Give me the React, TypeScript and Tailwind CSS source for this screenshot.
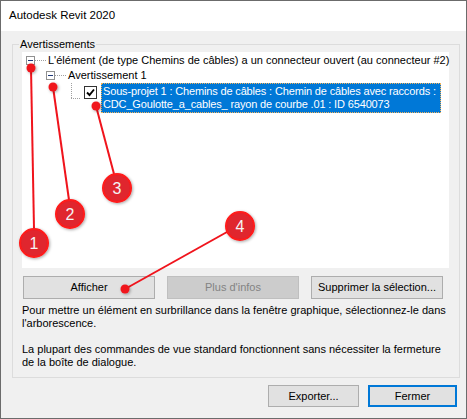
import React from "react";

const font = "font-['Liberation_Sans',Arial,sans-serif]";

function ExpandBox() {
  return (
    <span className="flex h-[9px] w-[9px] items-center justify-center border border-[#919191] bg-white">
      <span className="h-px w-[5px] bg-[#1f3a7a]" />
    </span>
  );
}

function CheckBox() {
  return (
    <span className="flex h-[13px] w-[13px] items-center justify-center border border-[#333333] bg-white">
      <svg width="9" height="9" viewBox="0 0 9 9">
        <path d="M1 4.5 L3.5 7 L8 1.5" fill="none" stroke="#000" strokeWidth="1.9" />
      </svg>
    </span>
  );
}

function TreeView() {
  return (
    <div className="relative h-[216px] w-full bg-white">
      {/* connector lines */}
      <svg className="absolute left-0 top-0" width="100" height="60">
        <g stroke="#a0a0a0" strokeWidth="1" strokeDasharray="1 1" fill="none">
          <path d="M13 8.5 H25" />
          <path d="M33 23.5 H45" />
          <path d="M49.5 31 V46" />
          <path d="M49 46.5 H59" />
        </g>
      </svg>
      <div className="relative flex flex-col pt-px">
        <div className="flex h-[15px] items-center">
          <span className="ml-[4px]">
            <ExpandBox />
          </span>
          <span className="ml-[13px] whitespace-nowrap leading-[15px]">
            L'élément (de type Chemins de câbles) a un connecteur ouvert (au connecteur #2)
          </span>
        </div>
        <div className="flex h-[15px] items-center">
          <span className="ml-[24px]">
            <ExpandBox />
          </span>
          <span className="ml-[13px] whitespace-nowrap leading-[15px]">Avertissement 1</span>
        </div>
        <div className="flex items-start">
          <span className="ml-[62px] mt-[3px]">
            <CheckBox />
          </span>
          <div className="ml-[4px] w-[340px] border border-dotted border-[#f3b35a] bg-[#0078d7] px-px py-px leading-[13px] tracking-[-0.15px] text-white">
            <div className="whitespace-nowrap">
              Sous-projet 1 : Chemins de câbles : Chemin de câbles avec raccords :
            </div>
            <div className="whitespace-nowrap">
              CDC_Goulotte_a_cables_ rayon de courbe .01 : ID 6540073
            </div>
          </div>
        </div>
      </div>
    </div>
  );
}

function Button({
  children,
  className = "",
  disabled = false,
}: {
  children: React.ReactNode;
  className?: string;
  disabled?: boolean;
}) {
  return (
    <button
      disabled={disabled}
      className={
        "flex items-center justify-center border leading-none " +
        (disabled
          ? "border-[#bfbfbf] bg-[#cccccc] text-[#838383] "
          : "border-[#adadad] bg-[#e1e1e1] text-black ") +
        className
      }
    >
      {children}
    </button>
  );
}

function Annotations() {
  const circles = [
    { cx: 33, cy: 242, n: "1" },
    { cx: 69, cy: 213, n: "2" },
    { cx: 116, cy: 187, n: "3" },
    { cx: 239, cy: 225, n: "4" },
  ];
  return (
    <svg className="pointer-events-none absolute left-0 top-0" width="467" height="419">
      <defs>
        <filter id="sh" x="-50%" y="-50%" width="200%" height="200%">
          <feDropShadow dx="1" dy="1" stdDeviation="1.5" floodColor="#000" floodOpacity="0.35" />
        </filter>
      </defs>
      <g stroke="#f0141c" strokeWidth="2" fill="none">
        <path d="M30 67 L33 228" />
        <path d="M52 86 L68 199" />
        <path d="M95 105 L113 173" />
        <path d="M124 288 L226 231" />
      </g>
      <g fill="#f0141c" filter="url(#sh)">
        <circle cx="30" cy="67" r="4.5" />
        <circle cx="52" cy="86" r="4.5" />
        <circle cx="95" cy="105" r="4.5" />
        <circle cx="124" cy="288" r="4.5" />
      </g>
      {circles.map((c) => (
        <g key={c.n}>
          <circle cx={c.cx} cy={c.cy} r="14" fill="#e0252d" stroke="#ff1a1a" strokeWidth="2" filter="url(#sh)" />
          <text
            x={c.cx}
            y={c.cy + 5.5}
            textAnchor="middle"
            fill="#f4f4f4"
            fontSize="16"
            fontFamily="'Liberation Sans', sans-serif"
          >
            {c.n}
          </text>
        </g>
      ))}
    </svg>
  );
}

export default function App() {
  return (
    <div
      className={`relative h-[419px] w-[467px] overflow-hidden border border-[#6b6b6b] bg-[#f0f0f0] text-[11px] text-black ${font}`}
    >
      <div className="flex h-[30px] items-center bg-white pb-[1px] pl-[8px] text-[11.5px]">
        Autodesk Revit 2020
      </div>
      <div className="pl-[11px] pr-[9px] pt-[6px]">
        <fieldset className="h-[341px] border border-[#dcdcdc] pl-[9px] pr-[10px]">
          <legend className="-ml-[3px] px-px leading-[15px]">Avertissements</legend>
          <TreeView />
          <div className="mt-[8px] flex gap-[12px] pl-px">
            <Button className="h-[23px] w-[132px]">Afficher</Button>
            <Button className="h-[23px] w-[132px]" disabled>
              Plus d'infos
            </Button>
            <Button className="h-[23px] w-[132px]">Supprimer la sélection...</Button>
          </div>
          <p className="mt-[5px] leading-[13px]">
            Pour mettre un élément en surbrillance dans la fenêtre graphique, sélectionnez-le dans
            l'arborescence.
          </p>
          <p className="mt-[13px] leading-[13px]">
            La plupart des commandes de vue standard fonctionnent sans nécessiter la fermeture de la
            boîte de dialogue.
          </p>
        </fieldset>
        <div className="mt-[7px] flex justify-end gap-[9px]">
          <Button className="h-[22px] w-[91px]">Exporter...</Button>
          <Button className="h-[22px] w-[89px] border-2 !border-[#0078d7]">Fermer</Button>
        </div>
      </div>
      <Annotations />
    </div>
  );
}
